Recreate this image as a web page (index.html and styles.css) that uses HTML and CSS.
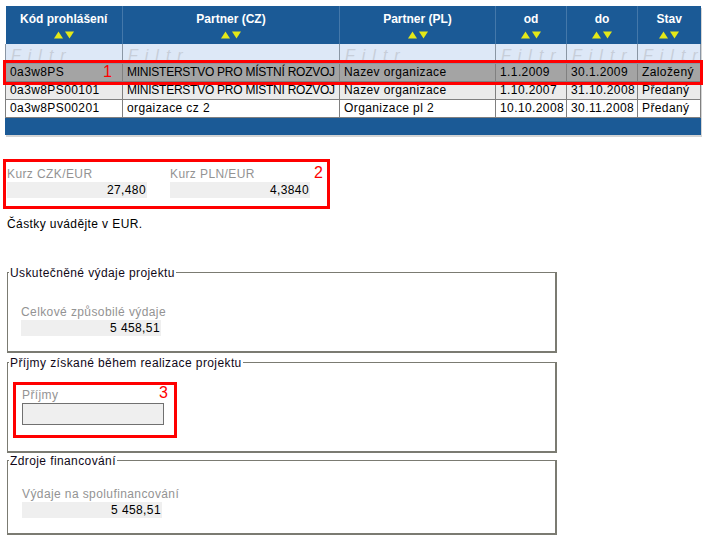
FILE: index.html
```html
<!DOCTYPE html>
<html lang="cs">
<head>
    <meta charset="UTF-8">
    <title>Prohlášení partnera</title>
    <link rel="stylesheet" href="styles.css">
</head>
<body>
    <!-- Seznam prohlášení -->
    <div class="grid-wrap">
        <table class="grid">
            <colgroup>
                <col style="width: 117px">
                <col style="width: 217px">
                <col style="width: 156px">
                <col style="width: 71px">
                <col style="width: 71px">
                <col style="width: 63px">
            </colgroup>
            <thead>
                <tr class="head">
                    <th>Kód prohlášení<span class="sort"><svg width="20" height="8" viewBox="0 0 20 8"><polygon points="0,7.5 4.5,0.5 9,7.5"/><polygon points="11,0.5 20,0.5 15.5,7.5"/></svg></span></th>
                    <th>Partner (CZ)<span class="sort"><svg width="20" height="8" viewBox="0 0 20 8"><polygon points="0,7.5 4.5,0.5 9,7.5"/><polygon points="11,0.5 20,0.5 15.5,7.5"/></svg></span></th>
                    <th>Partner (PL)<span class="sort"><svg width="20" height="8" viewBox="0 0 20 8"><polygon points="0,7.5 4.5,0.5 9,7.5"/><polygon points="11,0.5 20,0.5 15.5,7.5"/></svg></span></th>
                    <th>od<span class="sort"><svg width="20" height="8" viewBox="0 0 20 8"><polygon points="0,7.5 4.5,0.5 9,7.5"/><polygon points="11,0.5 20,0.5 15.5,7.5"/></svg></span></th>
                    <th>do<span class="sort"><svg width="20" height="8" viewBox="0 0 20 8"><polygon points="0,7.5 4.5,0.5 9,7.5"/><polygon points="11,0.5 20,0.5 15.5,7.5"/></svg></span></th>
                    <th>Stav<span class="sort"><svg width="20" height="8" viewBox="0 0 20 8"><polygon points="0,7.5 4.5,0.5 9,7.5"/><polygon points="11,0.5 20,0.5 15.5,7.5"/></svg></span></th>
                </tr>
                <tr class="filter">
                    <td><span>Filtr</span></td>
                    <td><span>Filtr</span></td>
                    <td><span>Filtr</span></td>
                    <td><span>Filtr</span></td>
                    <td><span>Filtr</span></td>
                    <td><span>Filtr</span></td>
                </tr>
            </thead>
            <tbody>
                <tr class="row selected">
                    <td>0a3w8PS</td>
                    <td class="caps">MINISTERSTVO PRO MÍSTNÍ ROZVOJ</td>
                    <td>Nazev organizace</td>
                    <td>1.1.2009</td>
                    <td>30.1.2009</td>
                    <td>Založený</td>
                </tr>
                <tr class="row alt">
                    <td>0a3w8PS00101</td>
                    <td class="caps">MINISTERSTVO PRO MÍSTNÍ ROZVOJ</td>
                    <td>Nazev organizace</td>
                    <td>1.10.2007</td>
                    <td>31.10.2008</td>
                    <td>Předaný</td>
                </tr>
                <tr class="row">
                    <td>0a3w8PS00201</td>
                    <td>orgaizace cz 2</td>
                    <td>Organizace pl 2</td>
                    <td>10.10.2008</td>
                    <td>30.11.2008</td>
                    <td>Předaný</td>
                </tr>
            </tbody>
            <tfoot>
                <tr class="foot"><td colspan="6"></td></tr>
            </tfoot>
        </table>
        <div class="mark mark-row"><span class="mark-num">1</span></div>
    </div>

    <!-- Kurzy -->
    <div class="rates">
        <div class="field">
            <div class="label">Kurz CZK/EUR</div>
            <div class="value">27,480</div>
        </div>
        <div class="field">
            <div class="label">Kurz PLN/EUR</div>
            <div class="value">4,3840</div>
        </div>
        <span class="mark-num">2</span>
    </div>

    <p class="note">Částky uvádějte v EUR.</p>

    <fieldset class="group spent">
        <legend>Uskutečněné výdaje projektu</legend>
        <div class="field">
            <div class="label">Celkové způsobilé výdaje</div>
            <div class="value">5 458,51</div>
        </div>
    </fieldset>

    <fieldset class="group income">
        <legend>Příjmy získané během realizace projektu</legend>
        <div class="income-box">
            <div class="label">Příjmy</div>
            <div class="input"></div>
            <span class="mark-num">3</span>
        </div>
    </fieldset>

    <fieldset class="group sources">
        <legend>Zdroje financování</legend>
        <div class="field">
            <div class="label">Výdaje na spolufinancování</div>
            <div class="value">5 458,51</div>
        </div>
    </fieldset>
</body>
</html>
```

FILE: styles.css
```css
body {
    margin: 0;
    padding: 0;
    font-family: "Liberation Sans", Arial, sans-serif;
    font-size: 12px;
    letter-spacing: 0.4px;
    color: #000;
    background: #fff;
}

/* ---- tabulka ---- */

.grid-wrap {
    position: relative;
    padding-top: 6px;
    padding-left: 5px;
}

.grid {
    width: 695px;
    table-layout: fixed;
    border-collapse: collapse;
    box-shadow: 1px 2px 0 #d4d4d4;
}

.grid .head th {
    height: 38px;
    padding: 6px 0 0 0;
    box-sizing: border-box;
    vertical-align: top;
    background-color: #1b5a96;
    color: #fff;
    font-size: 12px;
    font-weight: bold;
    letter-spacing: 0;
    text-align: center;
    border-left: 1px solid #4478aa;
    line-height: 14px;
}

.grid .head th:first-child {
    border-left: none;
}

.sort {
    display: block;
    height: 8px;
    margin-top: 5px;
    line-height: 8px;
}

.sort svg {
    display: block;
    margin: 0 auto;
    fill: #e4e818;
}

.grid .filter {
    height: 19px;
}

.grid .filter td {
    padding: 0;
    background-color: #dde8f7;
    border: 1px solid #8a96a4;
    border-top: none;
}

.grid .filter span {
    display: block;
    height: 18px;
    overflow: hidden;
    padding: 4px 0 0 5px;
    box-sizing: border-box;
    font-size: 16px;
    line-height: 16px;
    font-style: italic;
    letter-spacing: 7px;
    color: #c7ced9;
    white-space: nowrap;
}

.grid .row {
    height: 18px;
}

.grid .row td {
    padding: 0 4px;
    border: 1px solid #808080;
    white-space: nowrap;
    overflow: hidden;
    line-height: 15px;
    background-color: #fff;
}

.grid .row td.caps {
    letter-spacing: -0.25px;
}

.grid .row.selected td {
    background-color: #a4a4a4;
}

.grid .row.alt td {
    background-color: #ebebeb;
}

.grid .foot td {
    height: 16px;
    padding: 0;
    background-color: #1b5a96;
    border: 1px solid #1b5a96;
}

/* ---- značky ---- */

.mark {
    position: absolute;
    border: 3px solid #f00;
}

.mark-row {
    left: 3px;
    top: 60px;
    width: 694px;
    height: 19px;
}

.mark-num {
    position: absolute;
    color: #f00;
    font-size: 16px;
    line-height: 16px;
    letter-spacing: 0;
}

.mark-row .mark-num {
    left: 97px;
    top: 1px;
}

/* ---- kurzy ---- */

.rates {
    position: relative;
    display: flex;
    gap: 23px;
    width: 327px;
    box-sizing: border-box;
    margin: 24px 0 0 3px;
    padding: 5px 0 8px 1px;
    border: 3px solid #f00;
}

.rates .mark-num {
    right: 4px;
    top: 3px;
}

.label {
    color: #939393;
    line-height: 15px;
}

.value {
    width: 140px;
    height: 16px;
    padding-right: 1px;
    box-sizing: border-box;
    background-color: #efefef;
    text-align: right;
    line-height: 16px;
}

.note {
    margin: 8px 0 0 7px;
    line-height: 15px;
}

/* ---- skupiny ---- */

.group {
    width: 550px;
    box-sizing: border-box;
    margin: 0 0 0 7px;
    padding: 0 0 0 13px;
    border-color: #7b7b72;
    border-width: 1px 2px 2px 1px;
    border-style: solid;
}

.group legend {
    padding: 0 1px;
    margin-left: -12px;
    line-height: 14px;
    color: #100818;
}

.spent {
    margin-top: 34px;
    padding-top: 25px;
    padding-bottom: 15px;
}

.income {
    margin-top: 3px;
    padding: 12px 0 13px 7px;
}

.income legend {
    margin-left: -6px;
}

.income-box {
    position: relative;
    width: 164px;
    box-sizing: border-box;
    margin-left: -2px;
    padding: 3px 10px 10px 6px;
    border: 3px solid #f00;
}

.income-box .input {
    height: 22px;
    box-sizing: border-box;
    border: 1px solid #707070;
    background-color: #efefef;
}

.income-box .mark-num {
    right: 6px;
    top: 0;
}

.sources {
    margin-top: 1px;
    padding: 19px 0 15px 14px;
}

.sources legend {
    margin-left: -13px;
}
```
